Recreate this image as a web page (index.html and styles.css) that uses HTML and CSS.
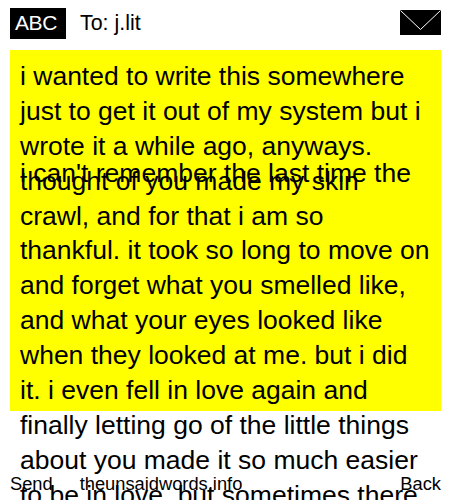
FILE: index.html
```html
<!DOCTYPE html>
<html lang="en">
<head>
    <meta charset="UTF-8">
    <meta name="viewport" content="width=device-width, initial-scale=1.0">
    <title>theunsaidwords.info</title>
    <link rel="stylesheet" href="styles.css">
</head>
<body>
    <div class="header">
        <div class="mode">ABC</div>
        <div class="to">To: j.lit</div>
        <svg class="envelope" width="41" height="25" viewBox="0 0 41 25">
            <rect width="41" height="25" fill="#000"/>
            <path d="M0.5 0.5 L20.5 19.5 L40.5 0.5" fill="none" stroke="#fff" stroke-width="1"/>
        </svg>
    </div>
    <div class="message">
        <p class="intro">i wanted to write this somewhere just to get it out of my system but i wrote it a while ago, anyways.</p>
        <p class="first-line">i can't remember the last time the</p>
        <p class="rest">thought of you made my skin crawl, and for that i am so thankful. it took so long to move on and forget what you smelled like, and what your eyes looked like when they looked at me. but i did it. i even fell in love again and finally letting go of the little things about you made it so much easier to be in love. but sometimes there</p>
    </div>
    <div class="footer">
        <span class="send">Send</span>
        <span class="site">theunsaidwords.info</span>
        <span class="back">Back</span>
    </div>
</body>
</html>
```

FILE: styles.css
```css
html, body {
    height: 500px;
    overflow: hidden;
}
body {
    margin: 0;
    position: relative;
    background: white;
    color: black;
    font-family: "Liberation Sans", Arial, sans-serif;
}
.header {
    display: flex;
    align-items: center;
    height: 31px;
    padding: 8px 9px 11px 10px;
}
.mode {
    background: black;
    color: white;
    width: 51px;
    height: 31px;
    padding-left: 5px;
    line-height: 29px;
    font-size: 21px;
    letter-spacing: -0.4px;
}
.to {
    margin-left: 14px;
    font-size: 21.4px;
}
.envelope {
    margin-left: auto;
    margin-bottom: 2px;
}
.message {
    background: #ff0;
    margin: 0 9px 0 10px;
    padding: 9px 11px 0 10px;
    height: 352px;
    font-size: 26.5px;
    line-height: 34.9px;
}
.message p {
    margin: 0;
}
.first-line {
    margin-top: -8px !important;
}
.rest {
    margin-top: -27px !important;
}
.footer {
    position: absolute;
    left: 10px;
    right: 9px;
    top: 473px;
    display: flex;
    font-size: 18.3px;
    line-height: 22px;
}
.site {
    margin-left: 27px;
}
.back {
    margin-left: auto;
}
```
